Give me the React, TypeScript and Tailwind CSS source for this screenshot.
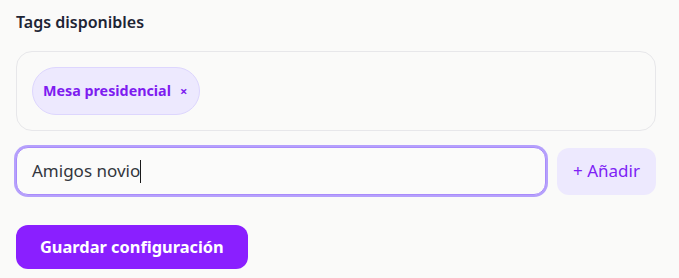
export default function App() {
  return (
    <div
      className="min-h-screen bg-[#fafaf9] px-4 pt-[10px]"
      style={{ fontFamily: '"Noto Sans", "Segoe UI", sans-serif' }}
    >
      <h2 className="text-[16px] leading-6 font-semibold text-[#1e2535] mb-[17px]">Tags disponibles</h2>

      {/* tag list */}
      <div className="w-[640px] rounded-2xl border border-[#e7e7ea] bg-[#fafaf9] p-[15px] flex flex-wrap gap-2">
        <span className="inline-flex items-center gap-[9px] h-12 pl-[10px] pr-[12px] rounded-full bg-[#ede9fe] border border-[#ddd6fe] text-[#7e1cf0] text-[14.3px] font-bold">
          Mesa presidencial
          <span className="text-[13px] font-bold leading-none">×</span>
        </span>
      </div>

      {/* new tag row */}
      <div className="w-[640px] mt-4 flex items-center gap-[11px]">
        <div className="flex-1 h-12 rounded-xl border border-[#a98bfb] ring-2 ring-[#b5a0fc] bg-[#fbfbfa] px-[15px] flex items-center text-[17px] text-[#33363d]">
          Amigos novio
          <span className="inline-block w-px h-[23px] bg-[#1a1a1a]" />
        </div>
        <button className="w-[99px] h-[47px] rounded-xl bg-[#ede9fe] text-[#7e22f5] text-[17px]">
          + Añadir
        </button>
      </div>

      <button className="mt-[30px] h-[44px] px-6 rounded-xl bg-[#8a1fff] text-white text-[16.4px] font-bold">
        Guardar configuración
      </button>
    </div>
  );
}
